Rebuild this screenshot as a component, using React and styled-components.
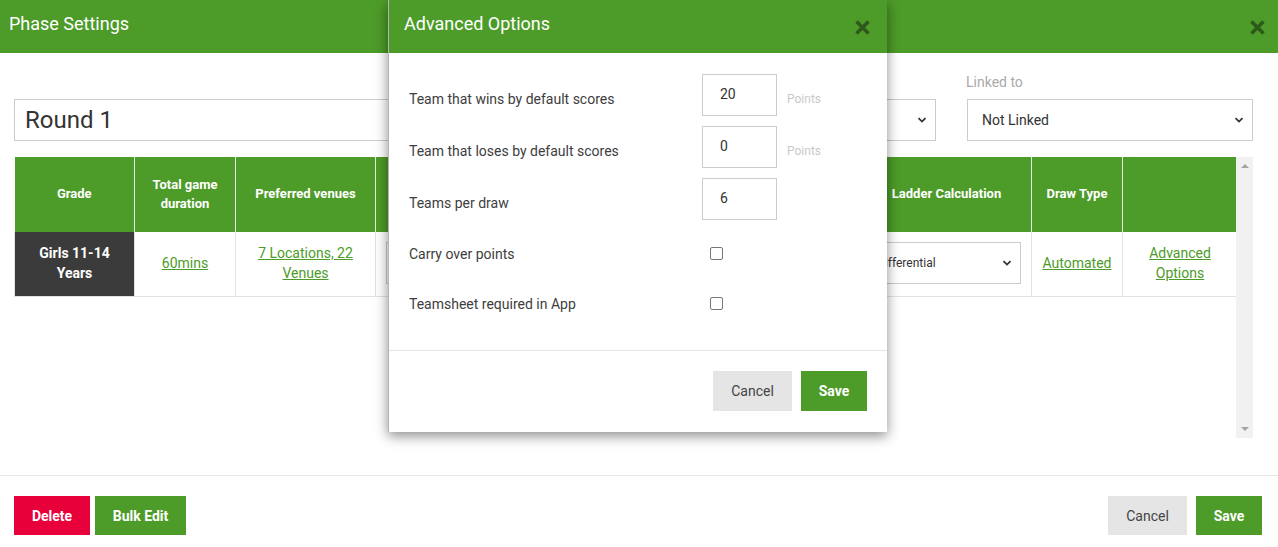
import React from "react";
import styled, { createGlobalStyle } from "styled-components";

const GREEN = "#4d9b28";
const DARK_X = "#2d5a1b";

const GlobalStyle = createGlobalStyle`
  * { box-sizing: border-box; }
  html, body {
    margin: 0;
    padding: 0;
    background: #fff;
    font-family: Roboto, "Liberation Sans", Arial, sans-serif;
    color: #333;
  }
`;

const Page = styled.div`
  position: relative;
  width: 1278px;
  height: 547px;
  overflow: hidden;
  background: #fff;
`;

const Header = styled.div`
  height: 53px;
  background: ${GREEN};
  display: flex;
  align-items: flex-start;
  justify-content: space-between;
  padding: 13px 12px 0 9px;
`;

const HeaderTitle = styled.div`
  font-size: 18px;
  line-height: 22px;
  color: #fff;
`;

const CloseButton = styled.div`
  width: 18px;
  height: 18px;
  margin-top: 5px;
  display: flex;
  align-items: center;
  justify-content: center;
`;

const Content = styled.div`
  padding: 21px 25px 0 14px;
`;

const FieldRow = styled.div`
  display: flex;
  align-items: flex-end;
  gap: 31px;
`;

const Field = styled.div`
  display: flex;
  flex-direction: column;
  flex: ${({ $grow }) => ($grow ? "1" : "0 0 286px")};
`;

const FieldLabel = styled.div`
  font-size: 14px;
  line-height: 17px;
  height: 17px;
  color: #aaa;
  margin-bottom: 8px;
  margin-left: -1px;
`;

const NameInput = styled.div`
  height: 42px;
  border: 1px solid #ccc;
  padding: 0 10px;
  font-size: 24px;
  display: flex;
  align-items: center;
  color: #333;
`;

const SelectBox = styled.div`
  height: 42px;
  border: 1px solid #ccc;
  background: #fff;
  display: flex;
  align-items: center;
  justify-content: space-between;
  padding: 0 8px 0 ${({ $indent }) => $indent ?? 14}px;
  font-size: ${({ $small }) => ($small ? "12px" : "14px")};
  color: #333;
  white-space: nowrap;
  overflow: hidden;
`;

const TableArea = styled.div`
  margin-top: 16px;
  height: 281px;
  display: flex;
`;

const TableScroll = styled.div`
  flex: 1;
  overflow: hidden;
`;

const Table = styled.table`
  border-collapse: collapse;
  table-layout: fixed;
  width: 1223px;
`;

const HeadCell = styled.th`
  height: 75px;
  background: ${GREEN};
  color: #fff;
  font-size: 13px;
  font-weight: 700;
  line-height: 19px;
  text-align: center;
  padding: 0 8px 2px;
  border-right: 1px solid rgba(255, 255, 255, 0.85);
  &:last-child { border-right: none; }
`;

const Cell = styled.td`
  height: 64px;
  background: ${({ $dark }) => ($dark ? "#3b3b3b" : "#fff")};
  color: ${({ $dark }) => ($dark ? "#fff" : "#333")};
  font-size: 14px;
  font-weight: ${({ $dark }) => ($dark ? 700 : 400)};
  line-height: 20px;
  text-align: center;
  padding: 0 10px 2px;
  border: 1px solid #e2e2e2;
  border-top: none;
`;

const Link = styled.span`
  color: ${GREEN};
  text-decoration: underline;
`;

const ScrollTrack = styled.div`
  width: 17px;
  background: #f1f1f1;
  display: flex;
  flex-direction: column;
  justify-content: space-between;
  align-items: center;
  padding: 7px 0;
`;

const Arrow = styled.div`
  width: 0;
  height: 0;
  border-left: 4px solid transparent;
  border-right: 4px solid transparent;
  ${({ $down }) =>
    $down ? "border-top: 4px solid #a3a3a3;" : "border-bottom: 4px solid #a3a3a3;"}
`;

const Footer = styled.div`
  margin-top: 37px;
  border-top: 1px solid #e6e6e6;
  padding: 20px 16px 0 14px;
  display: flex;
  justify-content: space-between;
`;

const ButtonGroup = styled.div`
  display: flex;
  gap: ${({ $gap }) => $gap || 5}px;
`;

const Button = styled.div`
  height: ${({ $h }) => $h || 39}px;
  width: ${({ $w }) => $w}px;
  display: flex;
  align-items: center;
  justify-content: center;
  white-space: nowrap;
  font-size: 14px;
  font-weight: ${({ $variant }) => ($variant === "plain" ? 400 : 700)};
  color: ${({ $variant }) => ($variant === "plain" ? "#444" : "#fff")};
  background: ${({ $variant }) =>
    $variant === "danger" ? "#e8003b" : $variant === "plain" ? "#e5e5e5" : GREEN};
`;

/* modal */
const Modal = styled.div`
  position: absolute;
  top: 0;
  left: 388px;
  width: 499px;
  height: 432px;
  background: #fff;
  border-left: 1px solid #b5b5b5;
  box-shadow: 0 4px 12px rgba(0, 0, 0, 0.45);
  display: flex;
  flex-direction: column;
`;

const ModalHeader = styled(Header)`
  padding: 13px 16px 0 15px;
`;

const ModalBody = styled.div`
  padding: 21px 20px 21px 20px;
  border-bottom: 1px solid #e5e5e5;
`;

const InputRows = styled.div`
  display: flex;
  flex-direction: column;
  gap: 10px;
`;

const OptionRow = styled.div`
  display: flex;
  align-items: ${({ $check }) => ($check ? "center" : "flex-start")};
  height: ${({ $check }) => ($check ? 50 : 42)}px;
`;

const OptionLabel = styled.div`
  width: 293px;
  font-size: 14px;
  line-height: 20px;
  color: #3d3d3d;
  padding-top: ${({ $check }) => ($check ? 0 : 15)}px;
`;

const NumberBox = styled.div`
  width: 75px;
  height: 42px;
  border: 1px solid #ccc;
  padding: 0 17px 3px;
  font-size: 14px;
  display: flex;
  align-items: center;
  color: #333;
`;

const Unit = styled.div`
  margin-left: 10px;
  font-size: 12px;
  color: #c9c9c9;
  padding-top: 18px;
`;

const CheckRows = styled.div`
  margin-top: 9px;
`;

const CheckBox = styled.div`
  width: 13px;
  height: 13px;
  margin-left: 8px;
  margin-top: -2px;
  border: 1px solid #777;
  border-radius: 2px;
  background: #fff;
`;

const ModalFooter = styled.div`
  padding: 20px 20px 0;
  display: flex;
  justify-content: flex-end;
`;

const CloseIcon = () => (
  <svg width="17" height="17" viewBox="0 0 17 17">
    <path d="M2.5 2.5 L14.5 14.5 M14.5 2.5 L2.5 14.5" stroke={DARK_X} strokeWidth="3.6" strokeLinecap="butt" />
  </svg>
);

const Chevron = ({ size = 10 }) => (
  <svg width={size} height={size} viewBox="0 0 10 10">
    <path d="M1.5 3.2 L5 6.6 L8.5 3.2" fill="none" stroke="#333" strokeWidth="1.8" />
  </svg>
);

// the middle columns sit under the dialog, so their headings stay blank
const columns = [
  { w: 120, label: "Grade" },
  { w: 101, label: "Total game duration" },
  { w: 140, label: "Preferred venues" },
  { w: 245, label: "" },
  { w: 241, label: "" },
  { w: 170, label: "Ladder Calculation" },
  { w: 91, label: "Draw Type" },
  { w: 115, label: "" },
];

const options = [
  { label: "Team that wins by default scores", value: "20", unit: "Points" },
  { label: "Team that loses by default scores", value: "0", unit: "Points" },
  { label: "Teams per draw", value: "6" },
];

const checks = ["Carry over points", "Teamsheet required in App"];

export default function App() {
  return (
    <Page>
      <GlobalStyle />
      <Header>
        <HeaderTitle>Phase Settings</HeaderTitle>
        <CloseButton>
          <CloseIcon />
        </CloseButton>
      </Header>

      <Content>
        <FieldRow>
          <Field $grow>
            <NameInput>Round 1</NameInput>
          </Field>
          <Field>
            <FieldLabel />
            <SelectBox>
              <span />
              <Chevron />
            </SelectBox>
          </Field>
          <Field>
            <FieldLabel>Linked to</FieldLabel>
            <SelectBox>
              Not Linked
              <Chevron />
            </SelectBox>
          </Field>
        </FieldRow>

        <TableArea>
          <TableScroll>
            <Table>
              <colgroup>
                {columns.map((c, i) => (
                  <col key={i} style={{ width: c.w }} />
                ))}
              </colgroup>
              <thead>
                <tr>
                  {columns.map((c, i) => (
                    <HeadCell key={i}>{c.label}</HeadCell>
                  ))}
                </tr>
              </thead>
              <tbody>
                <tr>
                  <Cell $dark>Girls 11-14 Years</Cell>
                  <Cell>
                    <Link>60mins</Link>
                  </Cell>
                  <Cell>
                    <Link>7 Locations, 22 Venues</Link>
                  </Cell>
                  <Cell>
                    <SelectBox $small>
                      <span />
                      <Chevron />
                    </SelectBox>
                  </Cell>
                  <Cell />
                  <Cell>
                    <SelectBox $small $indent={4}>
                      Differential
                      <Chevron />
                    </SelectBox>
                  </Cell>
                  <Cell>
                    <Link>Automated</Link>
                  </Cell>
                  <Cell>
                    <Link>Advanced Options</Link>
                  </Cell>
                </tr>
              </tbody>
            </Table>
          </TableScroll>
          <ScrollTrack>
            <Arrow />
            <Arrow $down />
          </ScrollTrack>
        </TableArea>
      </Content>

      <Footer>
        <ButtonGroup $gap={5}>
          <Button $variant="danger" $w={76}>Delete</Button>
          <Button $w={91}>Bulk Edit</Button>
        </ButtonGroup>
        <ButtonGroup $gap={9}>
          <Button $variant="plain" $w={79}>Cancel</Button>
          <Button $w={66}>Save</Button>
        </ButtonGroup>
      </Footer>

      <Modal>
        <ModalHeader>
          <HeaderTitle>Advanced Options</HeaderTitle>
          <CloseButton>
            <CloseIcon />
          </CloseButton>
        </ModalHeader>
        <ModalBody>
          <InputRows>
            {options.map((o) => (
              <OptionRow key={o.label}>
                <OptionLabel>{o.label}</OptionLabel>
                <NumberBox>{o.value}</NumberBox>
                {o.unit && <Unit>{o.unit}</Unit>}
              </OptionRow>
            ))}
          </InputRows>
          <CheckRows>
            {checks.map((c) => (
              <OptionRow key={c} $check>
                <OptionLabel $check>{c}</OptionLabel>
                <CheckBox />
              </OptionRow>
            ))}
          </CheckRows>
        </ModalBody>
        <ModalFooter>
          <ButtonGroup $gap={9}>
            <Button $variant="plain" $h={40} $w={79}>Cancel</Button>
            <Button $h={40} $w={66}>Save</Button>
          </ButtonGroup>
        </ModalFooter>
      </Modal>
    </Page>
  );
}
